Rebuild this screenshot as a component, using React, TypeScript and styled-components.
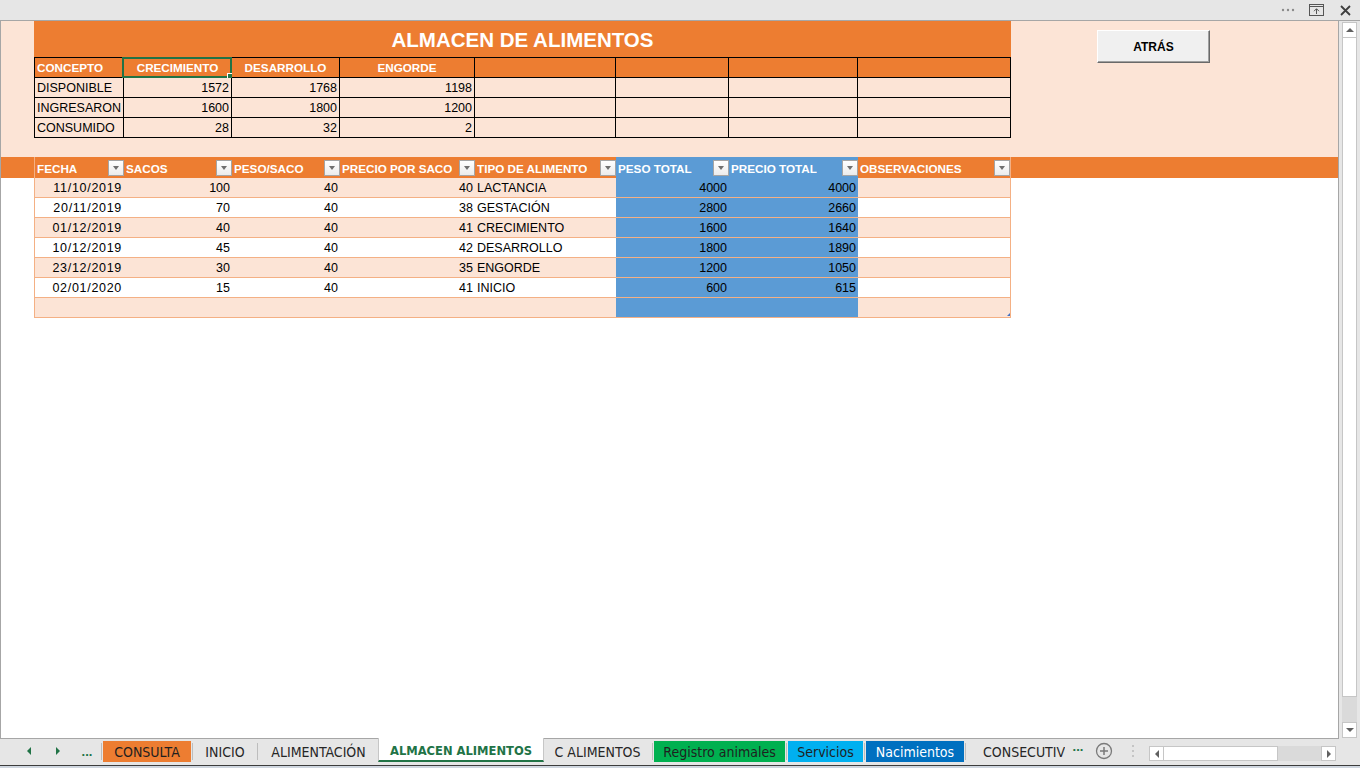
import React from "react";
import styled, { createGlobalStyle } from "styled-components";

const ORANGE = "#ed7d31";
const PEACH = "#fce4d6";
const BLUE = "#5b9bd5";
const LINE = "#f4b084";
const GREEN = "#217346";
const COLS = "89px 108px 108px 135px 141px 113px 129px 153px";

const GlobalStyle = createGlobalStyle`
  html, body { margin: 0; padding: 0; }
  body {
    width: 1360px;
    height: 768px;
    overflow: hidden;
    background: #e6e6e6;
    font-family: "Liberation Sans", Arial, sans-serif;
  }
`;

const Window = styled.div`
  width: 1360px;
  height: 768px;
  display: flex;
  flex-direction: column;
`;

const TopBar = styled.div`
  height: 20px;
  border-bottom: 1px solid #a6a6a6;
  display: flex;
  justify-content: flex-end;
  align-items: center;
`;

const TopIcon = styled.div`
  width: 29px;
  height: 20px;
  display: flex;
  align-items: center;
  justify-content: center;
`;

const Main = styled.div`
  height: 718px;
  display: flex;
`;

const Sheet = styled.div`
  width: 1339px;
  box-sizing: border-box;
  border-left: 1px solid #a6a6a6;
  border-right: 1px solid #a6a6a6;
  border-bottom: 1px solid #a6a6a6;
  background: #fff;
  display: flex;
  flex-direction: column;
`;

const Band = styled.div`
  height: 136px;
  background: ${PEACH};
  display: flex;
  align-items: flex-start;
`;

const Spacer = styled.div`
  width: 33px;
  flex: none;
`;

const SummaryBlock = styled.div`
  width: 977px;
  flex: none;
`;

const Title = styled.div`
  height: 36px;
  background: ${ORANGE};
  color: #fff;
  font-weight: 700;
  font-size: 20.5px;
  line-height: 37px;
  text-align: center;
`;

const SumGrid = styled.div`
  display: grid;
  grid-template-columns: ${COLS};
  border-left: 1px solid #000;
`;

const SumCell = styled.div<{ $head?: boolean; $align?: string }>`
  height: ${(p) => (p.$head ? 21 : 20)}px;
  box-sizing: border-box;
  border-right: 1px solid #000;
  border-bottom: 1px solid #000;
  border-top: ${(p) => (p.$head ? "1px solid #000" : "none")};
  background: ${(p) => (p.$head ? ORANGE : PEACH)};
  color: ${(p) => (p.$head ? "#fff" : "#000")};
  font-weight: ${(p) => (p.$head ? 700 : 400)};
  font-size: ${(p) => (p.$head ? "11.7px" : "12.5px")};
  text-align: ${(p) => p.$align || "left"};
  padding: ${(p) => (p.$head ? "0 2px" : "2px 2px 0")};
  line-height: ${(p) => (p.$head ? 20 : 17)}px;
  white-space: nowrap;
  position: relative;
`;

const Selection = styled.span`
  position: absolute;
  left: -2px;
  top: -1px;
  right: -1px;
  bottom: -1px;
  border: 2px solid ${GREEN};
  pointer-events: none;
`;

const Handle = styled.span`
  position: absolute;
  right: -4px;
  bottom: -4px;
  width: 5px;
  height: 5px;
  background: ${GREEN};
  border: 1px solid #fff;
`;

const DropBtn = styled.span<{ $float?: boolean }>`
  width: 16px;
  height: 16px;
  flex: none;
  box-sizing: border-box;
  border: 1px solid #a5a5a5;
  background: linear-gradient(#ffffff, #ececec);
  display: flex;
  align-items: center;
  justify-content: center;
  ${(p) => (p.$float ? "position: absolute; left: 100%; top: 1px; margin-left: 1px;" : "")}
  &::after {
    content: "";
    border-left: 3.5px solid transparent;
    border-right: 3.5px solid transparent;
    border-top: 4px solid #6f6f6f;
  }
`;

const ButtonWrap = styled.div`
  padding: 9px 0 0 86px;
`;

const Button = styled.button`
  width: 113px;
  height: 33px;
  box-sizing: border-box;
  background: #f0f0f0;
  border: 1px solid;
  border-color: #ffffff #696969 #696969 #ffffff;
  box-shadow: inset -1px -1px 0 #a0a0a0;
  font-family: "Liberation Sans", Arial, sans-serif;
  font-weight: 700;
  font-size: 12px;
  color: #000;
  padding: 0;
`;

const HeadBand = styled.div`
  height: 21px;
  background: ${ORANGE};
  display: flex;
`;

const DataGrid = styled.div`
  display: grid;
  grid-template-columns: ${COLS};
  width: 977px;
  box-sizing: border-box;
  border-left: 1px solid ${LINE};
  position: relative;
`;

const HeadCell = styled.div<{ $bg: string; $last?: boolean }>`
  height: 21px;
  box-sizing: border-box;
  background: ${(p) => p.$bg};
  border-right: ${(p) => (p.$last ? `1px solid ${LINE}` : "none")};
  display: flex;
  align-items: center;
  justify-content: space-between;
  padding-left: 2px;
  color: #fff;
  font-weight: 700;
  font-size: 11.7px;
  white-space: nowrap;
`;

const HeadLabel = styled.span`
  padding-top: 1px;
  overflow: hidden;
`;

const BodyBand = styled.div`
  display: flex;
`;

const DataCell = styled.div<{ $bg: string; $align?: string; $last?: boolean; $date?: boolean }>`
  height: 20px;
  box-sizing: border-box;
  background: ${(p) => p.$bg};
  border-bottom: 1px solid ${LINE};
  border-right: ${(p) => (p.$last ? `1px solid ${LINE}` : "none")};
  text-align: ${(p) => p.$align || "left"};
  padding: 2px 2px 0 2px;
  font-size: 12.5px;
  line-height: 17px;
  letter-spacing: ${(p) => (p.$date ? "0.7px" : "0")};
  color: #000;
  white-space: nowrap;
`;

const ResizeMark = styled.span`
  position: absolute;
  right: 1px;
  bottom: 2px;
  width: 0;
  height: 0;
  border-left: 3px solid transparent;
  border-bottom: 3px solid #4472c4;
`;

const VScroll = styled.div`
  width: 21px;
  box-sizing: border-box;
  padding: 1px 3px;
  display: flex;
  flex-direction: column;
`;

const ScrollBtn = styled.div`
  height: 16px;
  box-sizing: border-box;
  background: #fff;
  border: 1px solid #c6c6c6;
  display: flex;
  align-items: center;
  justify-content: center;
  flex: none;
`;

const Thumb = styled.div`
  flex: 1;
  box-sizing: border-box;
  background: #fff;
  border: 1px solid #c6c6c6;
  border-top: none;
`;

const Track = styled.div<{ $w?: number }>`
  ${(p) => (p.$w ? `width: ${p.$w}px;` : "height: 25px;")}
  background: #dadada;
  flex: none;
`;

const Arrow = styled.span<{ $dir: "up" | "down" | "left" | "right"; $color?: string }>`
  width: 0;
  height: 0;
  ${(p) => {
    const c = p.$color || "#606060";
    if (p.$dir === "up") return `border-left: 4px solid transparent; border-right: 4px solid transparent; border-bottom: 4px solid ${c};`;
    if (p.$dir === "down") return `border-left: 4px solid transparent; border-right: 4px solid transparent; border-top: 4px solid ${c};`;
    if (p.$dir === "left") return `border-top: 4px solid transparent; border-bottom: 4px solid transparent; border-right: 4px solid ${c};`;
    return `border-top: 4px solid transparent; border-bottom: 4px solid transparent; border-left: 4px solid ${c};`;
  }}
`;

const TabBar = styled.div`
  height: 26px;
  display: flex;
  align-items: flex-start;
  font-family: "Liberation Sans Narrow", "DejaVu Sans Condensed", "Liberation Sans", sans-serif;
  font-size: 14px;
`;

const BottomStrip = styled.div`
  height: 3px;
  box-sizing: border-box;
  border-top: 1px solid #3c3c3c;
  background: #cfd6df;
`;

const NavArea = styled.div`
  width: 100px;
  height: 24px;
  display: flex;
  align-items: center;
  flex: none;
`;

const NavSlot = styled.div<{ $w: number }>`
  width: ${(p) => p.$w}px;
  display: flex;
  justify-content: center;
  align-items: center;
  color: ${GREEN};
  font-weight: 700;
  font-size: 13px;
  font-family: "Liberation Sans", Arial, sans-serif;
  flex: none;
`;

const Sep = styled.div`
  width: 3px;
  height: 24px;
  flex: none;
  display: flex;
  justify-content: center;
  align-items: center;
  &::before {
    content: "";
    width: 1px;
    height: 17px;
    background: #bdbdbd;
  }
`;

const Tab = styled.div<{ $w: number; $bg?: string; $color?: string }>`
  width: ${(p) => p.$w}px;
  height: 21px;
  margin-top: 2px;
  flex: none;
  background: ${(p) => p.$bg || "transparent"};
  color: ${(p) => p.$color || "#262626"};
  display: flex;
  align-items: center;
  justify-content: center;
  white-space: nowrap;
  overflow: hidden;
`;

const ActiveTab = styled.div<{ $w: number }>`
  width: ${(p) => p.$w}px;
  height: 24px;
  margin-top: -1px;
  padding-top: 3px;
  flex: none;
  box-sizing: border-box;
  background: #fff;
  border-left: 1px solid #c6c6c6;
  border-right: 1px solid #c6c6c6;
  border-bottom: 2px solid ${GREEN};
  color: ${GREEN};
  font-weight: 700;
  font-size: 12.8px;
  display: flex;
  align-items: center;
  justify-content: center;
  white-space: nowrap;
`;

const ClipTab = styled.div<{ $w: number }>`
  width: ${(p) => p.$w}px;
  height: 21px;
  margin-top: 2px;
  flex: none;
  box-sizing: border-box;
  padding-left: 16px;
  color: #262626;
  display: flex;
  align-items: center;
  white-space: nowrap;
  overflow: hidden;
`;

const ClipText = styled.span`
  display: block;
  max-width: 82px;
  overflow: hidden;
`;

const IconSlot = styled.div<{ $w: number }>`
  width: ${(p) => p.$w}px;
  height: 24px;
  flex: none;
  display: flex;
  align-items: center;
  justify-content: center;
`;

const HScroll = styled.div`
  width: 188px;
  height: 15px;
  margin: 7px 0 0 3px;
  display: flex;
  flex: none;
`;

const HBtn = styled.div`
  width: 15px;
  box-sizing: border-box;
  background: #fff;
  border: 1px solid #c6c6c6;
  display: flex;
  align-items: center;
  justify-content: center;
  flex: none;
`;

const HThumb = styled.div`
  width: 114px;
  box-sizing: border-box;
  background: #fff;
  border: 1px solid #c6c6c6;
  border-left: none;
  flex: none;
`;

const summaryHead = ["CONCEPTO", "CRECIMIENTO", "DESARROLLO", "ENGORDE", "", "", "", ""];
const summaryRows = [
  ["DISPONIBLE", "1572", "1768", "1198"],
  ["INGRESARON", "1600", "1800", "1200"],
  ["CONSUMIDO", "28", "32", "2"],
];

const dataHead = [
  "FECHA",
  "SACOS",
  "PESO/SACO",
  "PRECIO POR SACO",
  "TIPO DE ALIMENTO",
  "PESO TOTAL",
  "PRECIO TOTAL",
  "OBSERVACIONES",
];

const dataRows = [
  ["11/10/2019", "100", "40", "40", "LACTANCIA", "4000", "4000", ""],
  ["20/11/2019", "70", "40", "38", "GESTACIÓN", "2800", "2660", ""],
  ["01/12/2019", "40", "40", "41", "CRECIMIENTO", "1600", "1640", ""],
  ["10/12/2019", "45", "40", "42", "DESARROLLO", "1800", "1890", ""],
  ["23/12/2019", "30", "40", "35", "ENGORDE", "1200", "1050", ""],
  ["02/01/2020", "15", "40", "41", "INICIO", "600", "615", ""],
  ["", "", "", "", "", "", "", ""],
];

const isBlue = (i: number) => i === 5 || i === 6;

function Summary() {
  return (
    <SummaryBlock>
      <Title>ALMACEN DE ALIMENTOS</Title>
      <SumGrid>
        {summaryHead.map((h, i) => (
          <SumCell key={i} $head $align={i === 0 ? "left" : "center"}>
            {h}
            {i === 1 && (
              <>
                <Selection>
                  <Handle />
                </Selection>
                <DropBtn $float />
              </>
            )}
          </SumCell>
        ))}
        {summaryRows.map((r, ri) =>
          summaryHead.map((_, ci) => (
            <SumCell key={`${ri}-${ci}`} $align={ci === 0 ? "left" : "right"}>
              {r[ci] || ""}
            </SumCell>
          ))
        )}
      </SumGrid>
    </SummaryBlock>
  );
}

function DataTable() {
  return (
    <>
      <HeadBand>
        <Spacer />
        <DataGrid>
          {dataHead.map((h, i) => (
            <HeadCell key={h} $bg={isBlue(i) ? BLUE : ORANGE} $last={i === 7}>
              <HeadLabel>{h}</HeadLabel>
              <DropBtn />
            </HeadCell>
          ))}
        </DataGrid>
      </HeadBand>
      <BodyBand>
        <Spacer />
        <DataGrid>
          {dataRows.map((r, ri) =>
            r.map((v, ci) => (
              <DataCell
                key={`${ri}-${ci}`}
                $bg={isBlue(ci) ? BLUE : ri % 2 === 0 ? PEACH : "#ffffff"}
                $align={ci === 4 || ci === 7 ? "left" : "right"}
                $last={ci === 7}
                $date={ci === 0}
              >
                {v}
              </DataCell>
            ))
          )}
          <ResizeMark />
        </DataGrid>
      </BodyBand>
    </>
  );
}

function Tabs() {
  return (
    <TabBar>
      <NavArea>
        <NavSlot $w={58}>
          <Arrow $dir="left" $color={GREEN} />
        </NavSlot>
        <NavSlot $w={0}>
          <Arrow $dir="right" $color={GREEN} />
        </NavSlot>
        <NavSlot $w={58}>...</NavSlot>
      </NavArea>
      <Sep />
      <Tab $w={88} $bg={ORANGE} $color="#1f1f1f">CONSULTA</Tab>
      <Sep />
      <Tab $w={62}>INICIO</Tab>
      <Sep />
      <Tab $w={119}>ALIMENTACIÓN</Tab>
      <ActiveTab $w={166}>ALMACEN ALIMENTOS</ActiveTab>
      <Tab $w={107}>C ALIMENTOS</Tab>
      <Sep />
      <Tab $w={131} $bg="#00b050" $color="#1f1f1f">Registro animales</Tab>
      <Sep />
      <Tab $w={75} $bg="#00b0f0" $color="#1f1f1f">Servicios</Tab>
      <Sep />
      <Tab $w={98} $bg="#0070c0" $color="#ffffff">Nacimientos</Tab>
      <Sep />
      <ClipTab $w={101}>
        <ClipText>CONSECUTIVO</ClipText>
      </ClipTab>
      <NavSlot $w={20}>...</NavSlot>
      <IconSlot $w={32}>
        <svg width="18" height="18" viewBox="0 0 18 18">
          <circle cx="9" cy="9" r="7.5" fill="none" stroke="#7a7a7a" strokeWidth="1.3" />
          <path d="M9 5v8M5 9h8" stroke="#7a7a7a" strokeWidth="1.5" />
        </svg>
      </IconSlot>
      <IconSlot $w={26}>
        <svg width="4" height="14" viewBox="0 0 4 14">
          <rect x="1" y="1" width="2" height="2" fill="#c4c4c4" />
          <rect x="1" y="6" width="2" height="2" fill="#c4c4c4" />
          <rect x="1" y="11" width="2" height="2" fill="#c4c4c4" />
        </svg>
      </IconSlot>
      <HScroll>
        <HBtn>
          <Arrow $dir="left" />
        </HBtn>
        <HThumb />
        <Track $w={43} />
        <HBtn>
          <Arrow $dir="right" />
        </HBtn>
      </HScroll>
    </TabBar>
  );
}

export default function App() {
  return (
    <Window>
      <GlobalStyle />
      <TopBar>
        <TopIcon>
          <svg width="14" height="4" viewBox="0 0 14 4">
            <circle cx="2" cy="2" r="1.2" fill="#8a8a8a" />
            <circle cx="7" cy="2" r="1.2" fill="#8a8a8a" />
            <circle cx="12" cy="2" r="1.2" fill="#8a8a8a" />
          </svg>
        </TopIcon>
        <TopIcon>
          <svg width="15" height="12" viewBox="0 0 15 12">
            <rect x="0.5" y="0.5" width="14" height="11" fill="none" stroke="#555" />
            <path d="M1 2.5h13" stroke="#555" />
            <path d="M7.5 10V5M5 7.2l2.5-2.5 2.5 2.5" fill="none" stroke="#555" />
          </svg>
        </TopIcon>
        <TopIcon>
          <svg width="11" height="11" viewBox="0 0 11 11">
            <path d="M1 1l9 9M10 1l-9 9" stroke="#3f3f3f" strokeWidth="1.8" />
          </svg>
        </TopIcon>
      </TopBar>
      <Main>
        <Sheet>
          <Band>
            <Spacer />
            <Summary />
            <ButtonWrap>
              <Button>ATRÁS</Button>
            </ButtonWrap>
          </Band>
          <DataTable />
        </Sheet>
        <VScroll>
          <ScrollBtn>
            <Arrow $dir="up" />
          </ScrollBtn>
          <Thumb />
          <Track />
          <ScrollBtn>
            <Arrow $dir="down" />
          </ScrollBtn>
        </VScroll>
      </Main>
      <Tabs />
      <BottomStrip />
    </Window>
  );
}
